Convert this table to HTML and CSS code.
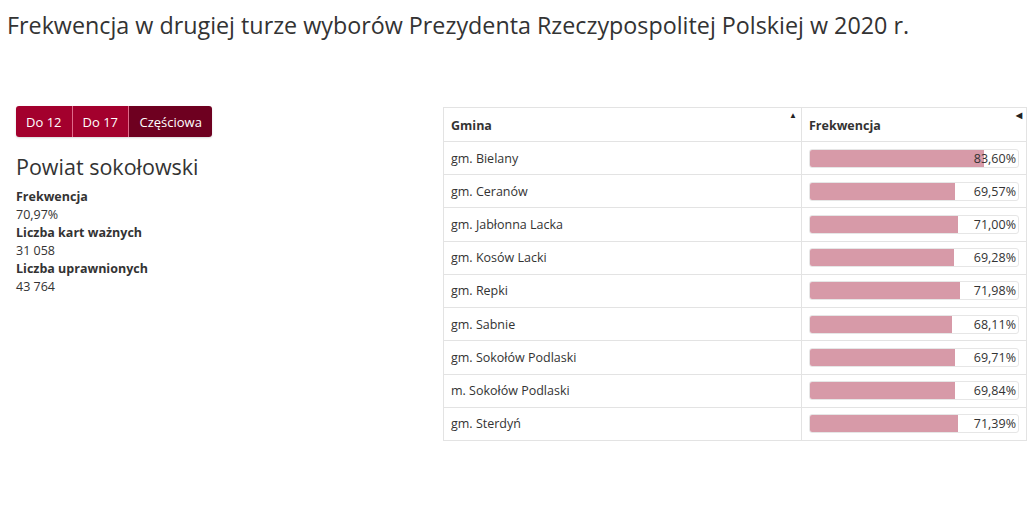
FILE: index.html
```html
<!DOCTYPE html>
<html lang="pl">
<head>
<meta charset="utf-8">
<title>Frekwencja</title>
<link rel="stylesheet" href="styles.css">
</head>
<body>
<h1 class="title">Frekwencja w drugiej turze wyborów Prezydenta Rzeczypospolitej Polskiej w 2020 r.</h1>
<div class="layout">
  <div class="side">
    <div class="btn-group">
      <button class="btn">Do 12</button>
      <button class="btn">Do 17</button>
      <button class="btn active">Częściowa</button>
    </div>
    <h2 class="area">Powiat sokołowski</h2>
    <dl class="stats">
      <dt>Frekwencja</dt><dd>70,97%</dd>
      <dt>Liczba kart ważnych</dt><dd>31 058</dd>
      <dt>Liczba uprawnionych</dt><dd>43 764</dd>
    </dl>
  </div>
  <table class="tbl">
    <thead>
      <tr><th class="col-name">Gmina<span class="sort up">▲</span></th><th class="col-val">Frekwencja<span class="sort left">◀</span></th></tr>
    </thead>
    <tbody>
      <tr><td>gm. Bielany</td><td><div class="bar"><div class="fill" style="width:83.60%"></div><span>83,60%</span></div></td></tr>
      <tr><td>gm. Ceranów</td><td><div class="bar"><div class="fill" style="width:69.57%"></div><span>69,57%</span></div></td></tr>
      <tr><td>gm. Jabłonna Lacka</td><td><div class="bar"><div class="fill" style="width:71.00%"></div><span>71,00%</span></div></td></tr>
      <tr><td>gm. Kosów Lacki</td><td><div class="bar"><div class="fill" style="width:69.28%"></div><span>69,28%</span></div></td></tr>
      <tr><td>gm. Repki</td><td><div class="bar"><div class="fill" style="width:71.98%"></div><span>71,98%</span></div></td></tr>
      <tr><td>gm. Sabnie</td><td><div class="bar"><div class="fill" style="width:68.11%"></div><span>68,11%</span></div></td></tr>
      <tr><td>gm. Sokołów Podlaski</td><td><div class="bar"><div class="fill" style="width:69.71%"></div><span>69,71%</span></div></td></tr>
      <tr><td>m. Sokołów Podlaski</td><td><div class="bar"><div class="fill" style="width:69.84%"></div><span>69,84%</span></div></td></tr>
      <tr><td>gm. Sterdyń</td><td><div class="bar"><div class="fill" style="width:71.39%"></div><span>71,39%</span></div></td></tr>
    </tbody>
  </table>
</div>
</body>
</html>
```
FILE: styles.css
```css
* { box-sizing: border-box; }
html, body { background: #fff; }
body {
  margin: 0;
  font-family: "Open Sans", "Noto Sans", sans-serif;
  color: #333;
  font-size: 12.5px;
}
.title {
  margin: 0;
  padding: 9px 0 0 7px;
  font-size: 23.3px;
  font-weight: 400;
  line-height: 32px;
  color: #333;
}
.layout {
  display: grid;
  grid-template-columns: 427px 584px;
  padding: 66px 0 0 16px;
}
.btn-group {
  display: inline-flex;
  margin-top: -1px;
  border-radius: 3px;
  overflow: hidden;
  box-shadow: 0 1px 2px rgba(0,0,0,0.15);
}
.btn {
  border: 0;
  margin: 0;
  font-family: inherit;
  font-size: 13px;
  color: #fff;
  background: #a3002d;
  height: 31px;
  padding: 0 10px;
  border-right: 1px solid #e06a8a;
  cursor: pointer;
}
.btn:last-child { border-right: 0; }
.btn.active { background: #6e0020; padding: 0 10.5px; }
.area {
  margin: 15px 0 6px;
  font-size: 21.5px;
  font-weight: 400;
  line-height: 30px;
  color: #333;
}
.stats { margin: 0; line-height: 18px; }
.stats dt { font-weight: 700; }
.stats dd { margin: 0; }
.tbl {
  border-collapse: collapse;
  width: 584px;
  height: 334px;
  align-self: start;
}
.tbl th, .tbl td {
  border: 1px solid #e3e3e3;
  padding: 0 7px;
  text-align: left;
  vertical-align: middle;
  height: 33px;
}
.tbl th {
  position: relative;
  font-weight: 700;
  height: 34px;
  padding-top: 2px;
}
.col-name { width: 358px; }
.sort {
  position: absolute;
  top: 3px;
  right: 4px;
  font-size: 8px;
  line-height: 8px;
  color: #222;
}
.bar {
  position: relative;
  height: 19px;
  border: 1px solid #e6e6e6;
  border-radius: 3px;
  background: #fff;
  overflow: hidden;
}
.fill {
  position: absolute;
  left: 0;
  top: 0;
  bottom: 0;
  background: #d79aa8;
}
.bar span {
  position: relative;
  display: block;
  text-align: right;
  padding-right: 2px;
  line-height: 17px;
  color: #333;
}
```
